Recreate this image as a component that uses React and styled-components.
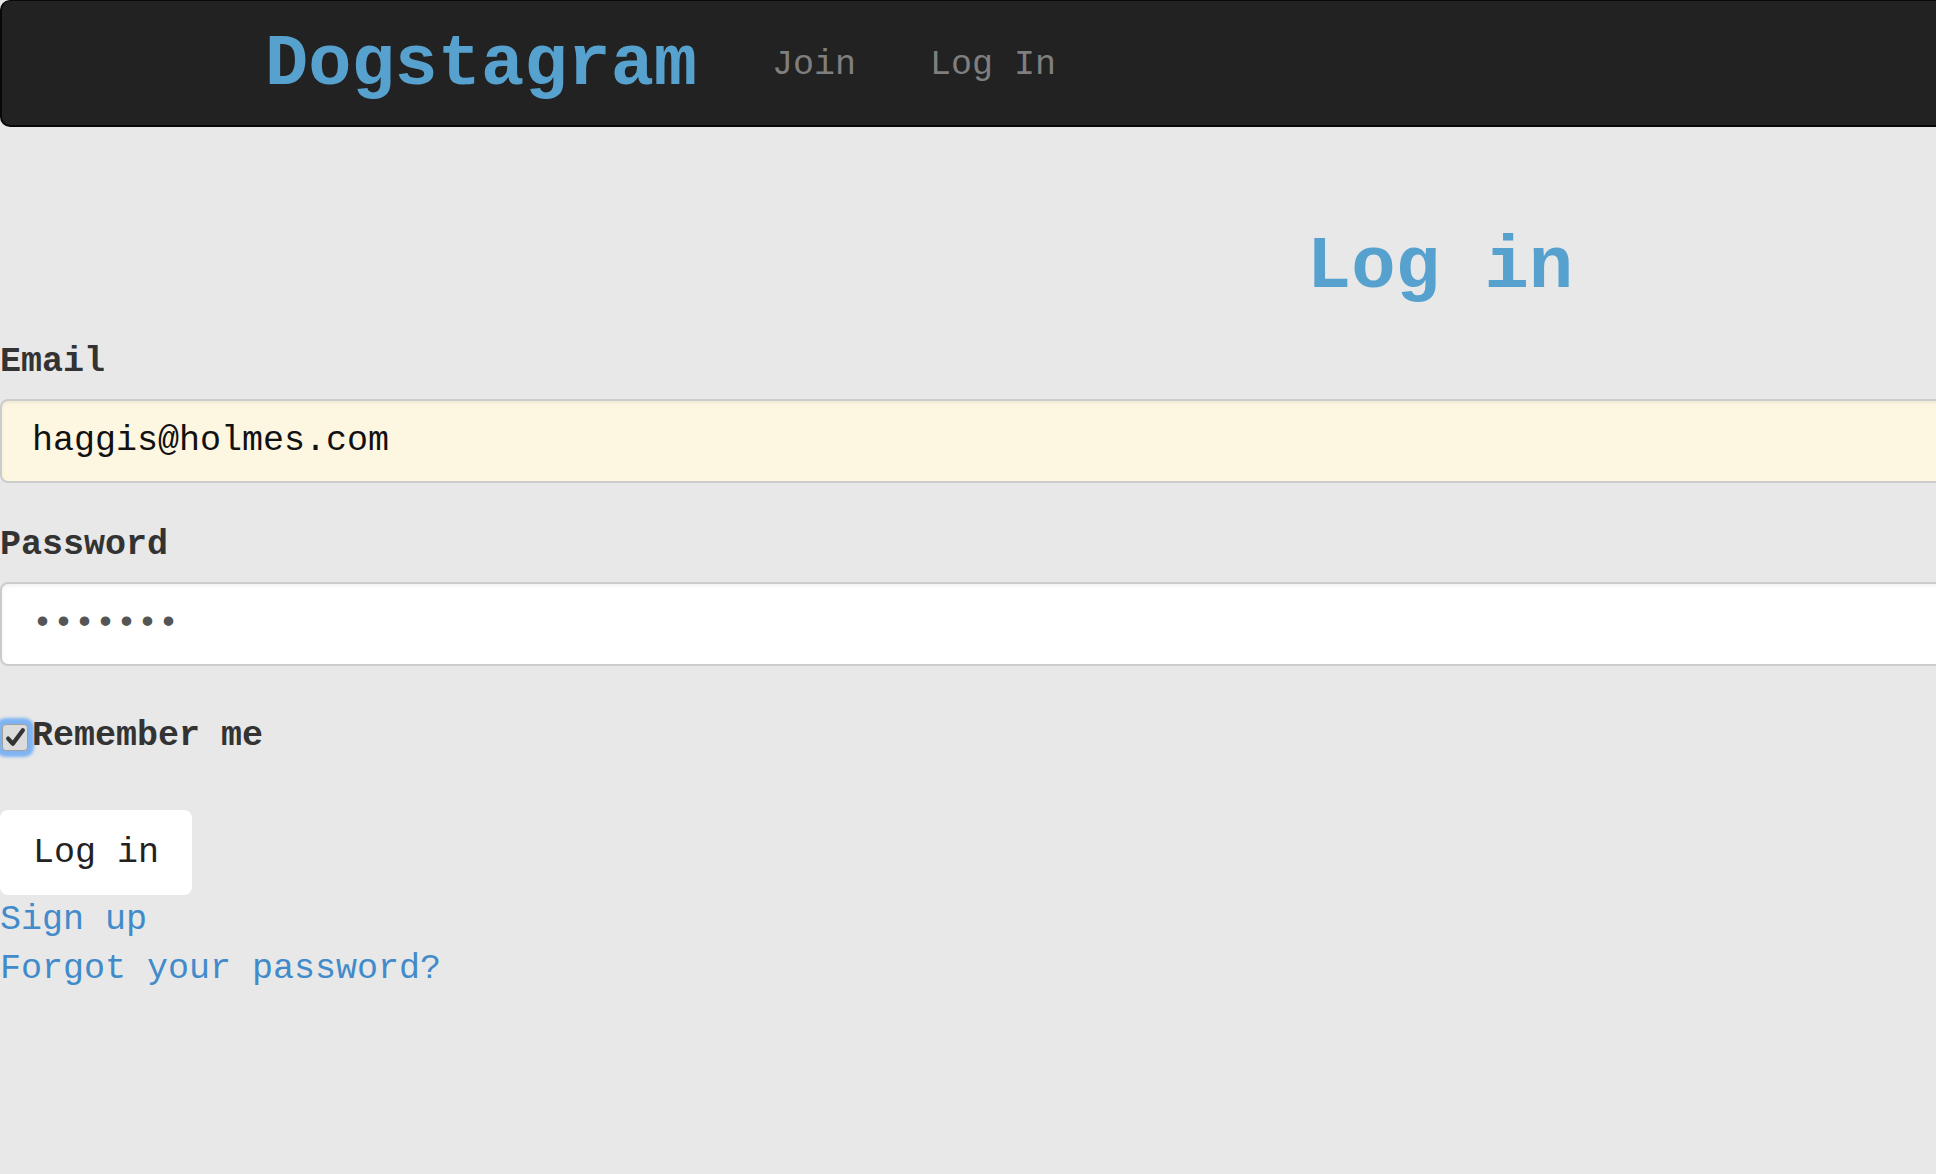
import styled, { createGlobalStyle } from "styled-components";

const GlobalStyle = createGlobalStyle`
  html, body {
    margin: 0;
    padding: 0;
    background: #e8e8e8;
    overflow-x: hidden;
  }
  body {
    font-family: "Liberation Mono", "DejaVu Sans Mono", monospace;
  }
  * {
    box-sizing: border-box;
  }
`;

const Page = styled.div`
  width: 2880px;
`;

const Navbar = styled.nav`
  height: 127px;
  display: flex;
  align-items: center;
  padding: 4px 0 0 263px;
  background: #222222;
  border: 1px solid #080808;
  border-width: 1px 0 2px 2px;
  border-radius: 10px 0 0 10px;
`;

const Brand = styled.a`
  font-size: 72px;
  font-weight: 700;
  color: #57a1cf;
  text-decoration: none;
  margin-right: 75px;
  line-height: 1;
`;

const NavLinks = styled.div`
  display: flex;
  gap: 74px;
`;

const NavLink = styled.a`
  font-size: 35px;
  color: #7f7f7f;
  text-decoration: none;
  line-height: 1;
`;

const Main = styled.main`
  padding-top: 103px;
`;

const Title = styled.h1`
  margin: 0 0 38px;
  text-align: center;
  font-size: 74px;
  line-height: 74px;
  font-weight: 700;
  color: #57a1cf;
`;

const Field = styled.div`
  display: flex;
  flex-direction: column;
  gap: 17px;
  margin-bottom: ${(p) => p.$gap || 42}px;
`;

const Label = styled.label`
  font-size: 35px;
  line-height: 40px;
  font-weight: 700;
  color: #333333;
`;

const Input = styled.input`
  width: 100%;
  height: 84px;
  padding: 0 0 0 30px;
  border: 2px solid #cccccc;
  border-radius: 8px;
  background: ${(p) => (p.$autofill ? "#fdf6e1" : "#ffffff")};
  box-shadow: inset 0 2px 3px rgba(0, 0, 0, 0.06);
  font-family: "Liberation Mono", monospace;
  font-size: 35px;
  color: ${(p) => (p.type === "password" ? "#555555" : "#111111")};
  outline: none;
`;

const CheckRow = styled.label`
  display: flex;
  align-items: center;
  gap: 4px;
  height: 40px;
  margin-bottom: 54px;
  font-size: 35px;
  line-height: 40px;
  font-weight: 700;
  color: #333333;
`;

const CheckBox = styled.span`
  width: 26px;
  height: 27px;
  margin-left: 2px;
  margin-top: 3px;
  display: flex;
  align-items: center;
  justify-content: center;
  background: #dcdcdc;
  border: 1px solid #a0a0a0;
  border-radius: 4px;
  box-shadow: 0 0 3px 6px rgba(108, 170, 244, 0.85);
`;

const Button = styled.button`
  display: block;
  padding: 23px 33px 22px;
  background: #ffffff;
  border: none;
  border-radius: 8px;
  font-family: "Liberation Mono", monospace;
  font-size: 35px;
  line-height: 40px;
  color: #222222;
`;

const Links = styled.div`
  display: flex;
  flex-direction: column;
  align-items: flex-start;
  padding-top: 1px;
`;

const TextLink = styled.a`
  font-size: 35px;
  line-height: 49px;
  color: #428bca;
  text-decoration: none;
`;

export default function App() {
  return (
    <Page>
      <GlobalStyle />
      <Navbar>
        <Brand href="#">Dogstagram</Brand>
        <NavLinks>
          <NavLink href="#">Join</NavLink>
          <NavLink href="#">Log In</NavLink>
        </NavLinks>
      </Navbar>
      <Main>
        <Title>Log in</Title>
        <form onSubmit={(e) => e.preventDefault()}>
          <Field>
            <Label htmlFor="email">Email</Label>
            <Input id="email" type="email" $autofill defaultValue="haggis@holmes.com" />
          </Field>
          <Field $gap={50}>
            <Label htmlFor="password">Password</Label>
            <Input id="password" type="password" defaultValue="1234567" />
          </Field>
          <CheckRow>
            <CheckBox>
              <svg width="21" height="21" viewBox="0 0 20 20">
                <path d="M3 11 L7.5 16 L17 3" fill="none" stroke="#333" strokeWidth="4" strokeLinecap="round" strokeLinejoin="round" />
              </svg>
            </CheckBox>
            Remember me
          </CheckRow>
          <Button type="submit">Log in</Button>
          <Links>
            <TextLink href="#">Sign up</TextLink>
            <TextLink href="#">Forgot your password?</TextLink>
          </Links>
        </form>
      </Main>
    </Page>
  );
}
